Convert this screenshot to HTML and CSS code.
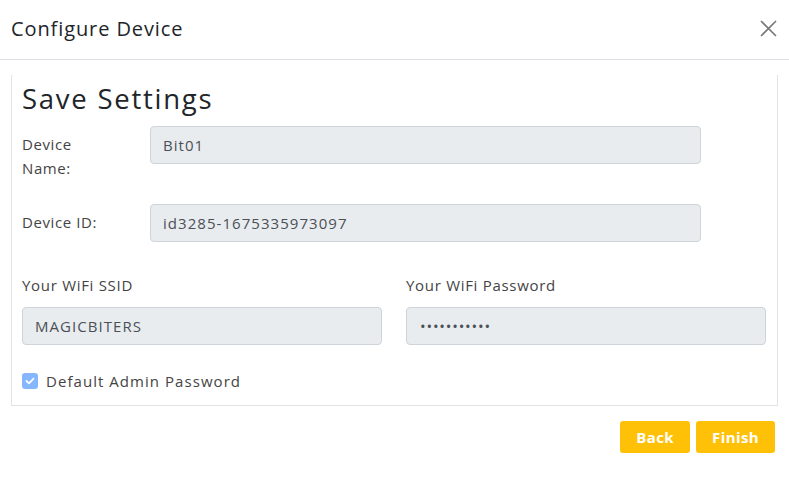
FILE: index.html
```html
<!DOCTYPE html>
<html>
<head>
<meta charset="utf-8">
<link rel="stylesheet" href="styles.css">
</head>
<body>
<div class="modal">
  <div class="modal-header">
    <h5 class="modal-title">Configure Device</h5>
    <button class="close" aria-label="Close">
      <svg width="17" height="17" viewBox="0 0 17 17"><path d="M1 1L16 16M16 1L1 16" stroke="#777" stroke-width="1.6" fill="none"/></svg>
    </button>
  </div>
  <div class="modal-body">
    <div class="card">
      <h3 class="card-title">Save Settings</h3>
      <div class="row-inline">
        <label class="lbl">Device<br>Name:</label>
        <div class="input">Bit01</div>
      </div>
      <div class="row-inline row-id">
        <label class="lbl">Device ID:</label>
        <div class="input">id3285-1675335973097</div>
      </div>
      <div class="wifi">
        <div class="col">
          <label class="lbl-top">Your WiFi SSID</label>
          <div class="input">MAGICBITERS</div>
        </div>
        <div class="col">
          <label class="lbl-top">Your WiFi Password</label>
          <div class="input pw">•••••••••••</div>
        </div>
      </div>
      <div class="check">
        <span class="box"><svg width="10" height="8" viewBox="0 0 10 8"><path d="M1.5 4L4 6.3L8.5 1.7" stroke="#fff" stroke-width="1.7" fill="none" stroke-linecap="round" stroke-linejoin="round"/></svg></span>
        <span class="check-label">Default Admin Password</span>
      </div>
    </div>
    <div class="actions">
      <button class="btn">Back</button>
      <button class="btn">Finish</button>
    </div>
  </div>
</div>
</body>
</html>
```
FILE: styles.css
```css
* { box-sizing: border-box; }
html, body { margin: 0; padding: 0; background: #fff; }
body { font-family: "Open Sans", "DejaVu Sans", sans-serif; color: #212529; width: 789px; height: 483px; overflow: hidden; }
.modal-header { height: 60px; border-bottom: 1px solid #dee2e6; display: flex; align-items: center; justify-content: space-between; padding: 0 11px 3px 11px; }
.modal-title { margin: 0; font-size: 20px; font-weight: 400; color: #212529; letter-spacing: 0.9px; }
.close { border: 0; background: none; padding: 0; margin: 0 1px 0 0; width: 17px; height: 17px; display: flex; }
.modal-body { padding: 15px 11px 0 11px; }
.card { border: 1px solid #e3e3e3; border-top: 0; padding: 8px 10px 12px 10px; }
.card-title { margin: 0 0 11px 0; font-size: 27.5px; font-weight: 400; line-height: 32px; color: #212529; letter-spacing: 1.75px; }
.row-inline { display: grid; grid-template-columns: 128px 551px; align-items: start; }
.row-id { margin-top: 24px; }
.lbl { font-size: 15px; line-height: 24px; color: #444; padding-top: 6px; letter-spacing: 0.6px; }
.input { height: 38px; background: #e9ecef; border: 1px solid #ced4da; border-radius: 4px; padding: 0 12px; font-size: 15px; line-height: 36px; color: #495057; letter-spacing: 1.05px; }
.wifi { display: grid; grid-template-columns: 360px 360px; column-gap: 24px; margin-top: 31px; }
.lbl-top { display: block; font-size: 15px; line-height: 24px; color: #444; margin-bottom: 10px; letter-spacing: 0.7px; }
.pw { font-size: 15px; letter-spacing: 0.8px; padding-left: 13px; }
.check { display: flex; align-items: center; margin-top: 24px; }
.box { width: 16px; height: 16px; border-radius: 3px; background: #86b7fe; display: flex; align-items: center; justify-content: center; }
.check-label { margin-left: 8px; font-size: 15px; color: #444; line-height: 24px; letter-spacing: 1.05px; }
.actions { display: flex; justify-content: flex-end; gap: 6px; margin-top: 15px; padding-right: 3px; }
.btn { background: #ffc107; border: 0; border-radius: 3px; color: #fff; font-family: "Open Sans", sans-serif; font-weight: 700; font-size: 15px; height: 32px; padding: 0 16px 1px; letter-spacing: 0.4px; }
```
